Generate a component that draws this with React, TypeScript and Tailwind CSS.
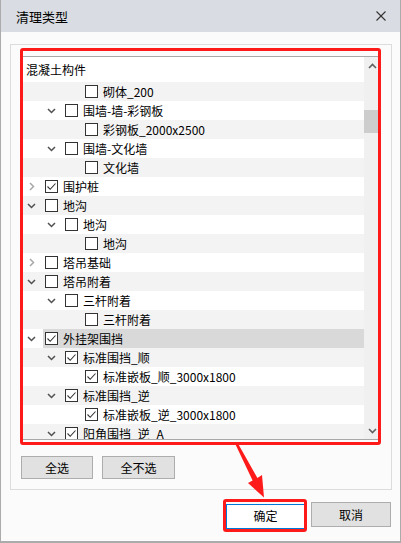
import React from "react";

type Row = { t: string; l: number; c: boolean; e: "open" | "closed" | null; sel?: boolean };

const rows: Row[] = [
  { t: "砌体_200", l: 2, c: false, e: null },
  { t: "围墙-墙-彩钢板", l: 1, c: false, e: "open" },
  { t: "彩钢板_2000x2500", l: 2, c: false, e: null },
  { t: "围墙-文化墙", l: 1, c: false, e: "open" },
  { t: "文化墙", l: 2, c: false, e: null },
  { t: "围护桩", l: 0, c: true, e: "closed" },
  { t: "地沟", l: 0, c: false, e: "open" },
  { t: "地沟", l: 1, c: false, e: "open" },
  { t: "地沟", l: 2, c: false, e: null },
  { t: "塔吊基础", l: 0, c: false, e: "closed" },
  { t: "塔吊附着", l: 0, c: false, e: "open" },
  { t: "三杆附着", l: 1, c: false, e: "open" },
  { t: "三杆附着", l: 2, c: false, e: null },
  { t: "外挂架围挡", l: 0, c: true, e: "open", sel: true },
  { t: "标准围挡_顺", l: 1, c: true, e: "open" },
  { t: "标准嵌板_顺_3000x1800", l: 2, c: true, e: null },
  { t: "标准围挡_逆", l: 1, c: true, e: "open" },
  { t: "标准嵌板_逆_3000x1800", l: 2, c: true, e: null },
  { t: "阳角围挡_逆_A", l: 1, c: true, e: "open" },
];

function Chevron({ e }: { e: Row["e"] }) {
  if (e === "open")
    return (
      <svg width="9" height="6" viewBox="0 0 9 6">
        <polyline points="1,1 4.5,4.5 8,1" fill="none" stroke="#505050" strokeWidth="1.5" />
      </svg>
    );
  if (e === "closed")
    return (
      <svg width="6" height="9" viewBox="0 0 6 9">
        <polyline points="1,1 4.5,4.5 1,8" fill="none" stroke="#a8a8a8" strokeWidth="1.5" />
      </svg>
    );
  return null;
}

function Check({ c }: { c: boolean }) {
  return (
    <div className="w-[13px] h-[13px] border border-[#333333] bg-white shrink-0 flex items-center justify-center">
      {c && (
        <svg width="11" height="11" viewBox="0 0 11 11">
          <polyline points="1.5,5.5 4.2,8.3 9.5,2.5" fill="none" stroke="#333333" strokeWidth="1.1" />
        </svg>
      )}
    </div>
  );
}

export default function App() {
  const font = { fontFamily: '"Noto Sans CJK SC", "Microsoft YaHei", sans-serif' };
  return (
    <div
      className="relative w-[401px] h-[543px] flex flex-col bg-[#fbfbfb] border-l border-r border-b-2 border-[#ababab] text-black overflow-hidden"
      style={font}
    >
      {/* title bar */}
      <div className="h-[32px] shrink-0 bg-[#d9dde3] flex items-center justify-between pl-[15px] pr-[14px]">
        <span className="text-[13px] leading-none">清理类型</span>
        <svg width="10" height="10" viewBox="0 0 10 10">
          <line x1="0.5" y1="0.5" x2="9.5" y2="9.5" stroke="#333" strokeWidth="1.1" />
          <line x1="9.5" y1="0.5" x2="0.5" y2="9.5" stroke="#333" strokeWidth="1.1" />
        </svg>
      </div>

      {/* body */}
      <div className="flex-1 flex flex-col">
        {/* group box */}
        <div className="relative mt-[12px] ml-[9px] mr-[8px] h-[446px] border border-[#dcdcdc] bg-[#fbfbfb] flex flex-col">
          {/* list */}
          <div className="relative ml-[11px] mr-[10px] mt-[11px] h-[384px] border border-[#a8a8a8] bg-white flex">
            <div className="flex-1 overflow-hidden flex flex-col">
              <div className="h-[25px] shrink-0 flex items-center pl-[3px] text-[12px] leading-none">混凝土构件</div>
              {rows.map((r, i) => (
                <div
                  key={i}
                  className={`h-[19px] shrink-0 flex items-center text-[12px] leading-none whitespace-nowrap ${
                    i % 2 === 0 ? "bg-[#f3f3f3]" : "bg-white"
                  }`}
                >
                  <div className="shrink-0" style={{ width: r.l * 20 }} />
                  <div className="w-[17px] shrink-0 flex items-center justify-center">
                    <Chevron e={r.e} />
                  </div>
                  <div
                    className={`flex-1 h-full flex items-center ml-[3px] pl-[2px] ${
                      r.sel ? "bg-[#d9d9d9]" : ""
                    }`}
                  >
                    <Check c={r.c} />
                    <span className="ml-[5px]">{r.t}</span>
                  </div>
                </div>
              ))}
            </div>
            {/* scrollbar */}
            <div className="relative w-[16px] shrink-0 bg-[#f0f0f0] flex flex-col items-center">
              <div className="h-[17px] w-full flex items-center justify-center">
                <svg width="9" height="6" viewBox="0 0 9 6">
                  <polyline points="1,5 4.5,1.5 8,5" fill="none" stroke="#606060" strokeWidth="1.6" />
                </svg>
              </div>
              <div className="mt-[36px] h-[23px] w-full bg-[#cdcdcd]" />
              <div className="flex-1" />
              <div className="h-[17px] w-full flex items-center justify-center">
                <svg width="9" height="6" viewBox="0 0 9 6">
                  <polyline points="1,1 4.5,4.5 8,1" fill="none" stroke="#606060" strokeWidth="1.6" />
                </svg>
              </div>
            </div>
          </div>

          {/* buttons */}
          <div className="flex gap-[9px] ml-[10px] mt-[16px]">
            <button className="w-[72px] h-[23px] bg-[#e1e1e1] border border-[#adadad] text-[12px] leading-none">全选</button>
            <button className="w-[73px] h-[23px] bg-[#e1e1e1] border border-[#adadad] text-[12px] leading-none">全不选</button>
          </div>

          {/* red annotation around list */}
          <div className="absolute left-[9px] top-[3px] w-[361px] h-[397px] border-[3.5px] border-[#ff1a1a] rounded-[3px] pointer-events-none" />
        </div>

        {/* footer */}
        <div className="flex justify-end gap-[6px] mt-[12px] mr-[9px]">
          <div className="relative">
            <button className="w-[79px] h-[25px] bg-white border border-[#0078d7] text-[12px] leading-none">确定</button>
            <div className="absolute -left-[3px] -top-[3px] -right-[2px] -bottom-[3px] border-[3.5px] border-[#ff1a1a] rounded-[3px] pointer-events-none" />
          </div>
          <button className="w-[80px] h-[25px] bg-[#e1e1e1] border border-[#adadad] text-[12px] leading-none">取消</button>
        </div>
      </div>

      {/* arrow */}
      <svg className="absolute left-0 top-0 pointer-events-none" width="401" height="543" viewBox="0 0 401 543">
        <polygon
          points="233.8,443 236.4,442.5 256.4,478 261,475 263,497.5 247,483 251.6,480.5"
          fill="#ff1a1a"
        />
      </svg>
    </div>
  );
}
